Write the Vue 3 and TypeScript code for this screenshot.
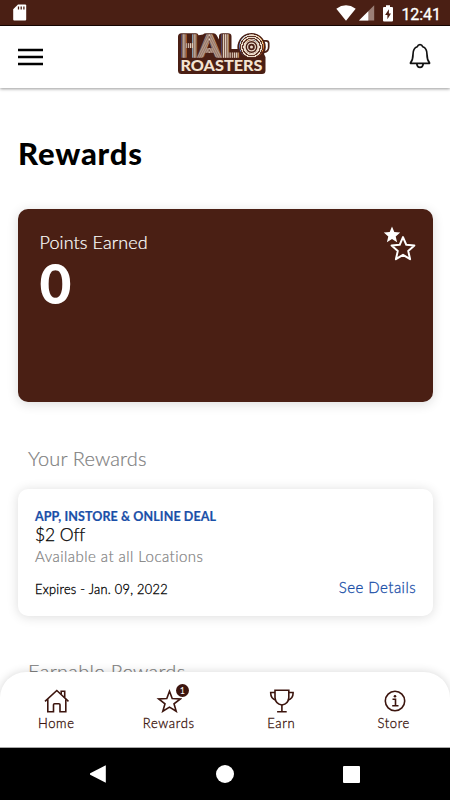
<script setup lang="ts">
interface Tab {
  id: string
  label: string
  badge?: number
}

interface Offer {
  channel: string
  title: string
  place: string
  expires: string
}

const points = 0

const offers: Offer[] = [
  {
    channel: 'APP, INSTORE & ONLINE DEAL',
    title: '$2 Off',
    place: 'Available at all Locations',
    expires: 'Expires - Jan. 09, 2022',
  },
]

const tabs: Tab[] = [
  { id: 'home', label: 'Home' },
  { id: 'rewards', label: 'Rewards', badge: 1 },
  { id: 'earn', label: 'Earn' },
  { id: 'store', label: 'Store' },
]

const logoLetters = [
  { char: 'H', x: 4.7, width: 17.2, paint: 'url(#bars)' },
  { char: 'A', x: 22.2, width: 22.4, paint: 'url(#chevrons)' },
  { char: 'L', x: 43.9, width: 18.5, paint: 'url(#bars)' },
  { char: 'O', x: 63.2, width: 24.6, paint: 'url(#rings)' },
]

// Start heights of the nested chevrons that stripe the letter A
const chevrons = Array.from({ length: 9 }, (_, i) => 2 - i * 4.4)
</script>

<template>
  <div class="phone">
    <div class="status">
      <svg class="sd" width="14" height="17" viewBox="0 0 14 17">
        <path d="M5 .5h7.2q1 0 1 1v14q0 1-1 1H1.200q-1 0-1-1V5.300z" fill="#fff" />
        <path d="M5.500 2.500v3M8.200 2.500v3M10.900 2.500v3" stroke="#4a1f14" stroke-width="1.300" />
      </svg>
      <div class="status-right">
        <svg class="wifi" width="20" height="16" viewBox="0 0 20 16">
          <path d="M.3 3.700Q10-3.200 19.700 3.700L10 15.700z" fill="#fff" />
        </svg>
        <svg class="signal" width="16" height="16" viewBox="0 0 16 16">
          <path d="M15.200.3v15.200H0z" fill="#9b7f77" />
          <path d="M9.300 6.200v9.300H0z" fill="#fff" />
        </svg>
        <svg class="battery" width="10" height="17" viewBox="0 0 10 17">
          <path d="M3 .3h4v1.700h2q1 0 1 1v12.500q0 1-1 1H1q-1 0-1-1V3q0-1 1-1h2z" fill="#fff" />
          <path d="M5.900 4.300 2.100 10h2.300v4.200L8 8.400H5.900z" fill="#4a1f14" />
        </svg>
        <span class="time">12:41</span>
      </div>
    </div>

    <header class="header">
      <svg class="menu" width="25" height="18" viewBox="0 0 25 18">
        <path d="M0 2h25M0 9h25M0 16h25" stroke="#000" stroke-width="2.600" />
      </svg>
      <svg class="logo" width="96" height="50" viewBox="0 -6 96 50">
        <defs>
          <pattern id="bars" patternUnits="userSpaceOnUse" x="5.200" y="0" width="2.200" height="40">
            <rect width="2.200" height="40" fill="#5e3325" />
            <rect width="1.100" height="40" fill="#ecdccb" />
          </pattern>
          <radialGradient id="rings" gradientUnits="userSpaceOnUse" cx="75.500" cy="15" r="2.300" spreadMethod="repeat">
            <stop offset="0" stop-color="#ecdccb" />
            <stop offset=".5" stop-color="#ecdccb" />
            <stop offset=".55" stop-color="#5e3325" />
            <stop offset="1" stop-color="#5e3325" />
          </radialGradient>
          <pattern id="chevrons" patternUnits="userSpaceOnUse" x="18.400" y="0" width="30" height="4.400">
            <rect width="30" height="4.400" fill="#5e3325" />
            <path
              v-for="y in chevrons"
              :key="y"
              :d="`M0 ${y + 30}L15 ${y}L30 ${y + 30}`"
              fill="none"
              stroke="#ecdccb"
              stroke-width="1"
            />
          </pattern>
        </defs>
        <path d="M86 8.800h4.200q2.500 0 2.500 2.500v3.500q0 5-4.700 5.600" fill="none" stroke="#4a1f14" stroke-width="1.700" />
        <path
          d="M5.500 1.300H20q2 0 2.500 2L27 2.500Q28 1.300 30 1.300H37.500Q39.500 1.300 40.500 3L43 7.500V4.500Q43 1.300 46.500 1.300H52Q55.500 1.300 55.500 4.500V17H61.500A14.200 14.200 0 1 1 88 22L89.500 25V38.500Q89.500 42 86 42H5.500Q2 42 2 38.500V4.800Q2 1.300 5.500 1.300z"
          fill="#4a1f14"
        />
        <g class="halo">
          <text
            v-for="l in logoLetters"
            :key="l.char"
            :x="l.x"
            y="25.300"
            :textLength="l.width"
            lengthAdjust="spacingAndGlyphs"
            :fill="l.paint"
            :stroke="l.paint"
          >{{ l.char }}</text>
        </g>
        <g fill="none" stroke="#ecdccb">
          <circle cx="75.500" cy="15" r="6.500" fill="#4a1f14" stroke-width="1.200" />
          <circle cx="75.500" cy="15" r="3.900" stroke-width="1.200" />
          <circle cx="75.500" cy="15" r="1.500" fill="#ecdccb" stroke="none" />
        </g>
        <text class="roasters" x="4.500" y="39" textLength="82" lengthAdjust="spacingAndGlyphs">ROASTERS</text>
      </svg>
      <svg class="bell" width="22" height="26" viewBox="0 0 22 26">
        <g fill="none" stroke="#111" stroke-width="1.700" stroke-linejoin="round">
          <path d="M1.500 19.800Q4 16.800 4 11.500Q4 5 8.300 3.700Q9 1.700 11 1.700T13.700 3.700Q18 5 18 11.500Q18 16.800 20.500 19.800V20.300H1.500z" />
          <path d="M7.800 20.800Q8.200 24.300 11 24.300T14.200 20.800" />
        </g>
      </svg>
    </header>

    <main class="content">
      <h1>Rewards</h1>

      <section class="points">
        <div>
          <div class="points-label">Points Earned</div>
          <div class="points-value">{{ points }}</div>
        </div>
        <svg width="33" height="37" viewBox="0 0 33 37">
          <path d="M9 .6 11.300 6l5.900.5-4.500 3.900L14.100 16.200 9 13.100 3.900 16.200 5.300 10.400.8 6.500 6.700 6z" fill="#fff" />
          <path d="M20 11.100 23.300 18.800 31.400 19.500 25.200 24.900 27.100 33.200 20 28.800 12.900 33.200 14.800 24.900 8.600 19.500 16.700 18.800z" fill="#4a1f14" stroke="#fff" stroke-width="2" stroke-linejoin="round" />
        </svg>
      </section>

      <h2>Your Rewards</h2>

      <article v-for="offer in offers" :key="offer.title" class="offer">
        <div class="channel">{{ offer.channel }}</div>
        <div class="title">{{ offer.title }}</div>
        <div class="place">{{ offer.place }}</div>
        <div class="offer-foot">
          <span class="expires">{{ offer.expires }}</span>
          <a class="details">See Details</a>
        </div>
      </article>

      <h2>Earnable Rewards</h2>
    </main>

    <nav class="tabs">
      <a v-for="tab in tabs" :key="tab.id" class="tab">
        <span class="tab-icon">
          <svg width="26" height="24" viewBox="0 0 26 24" fill="none" stroke="#3c150e" stroke-width="1.600">
            <g v-if="tab.id === 'home'">
              <path d="M2 12.300 13.800 1.500 25.500 12.300" />
              <path d="M4.800 10.300V22.700H10.500V15.800Q10.500 14.700 11.600 14.700H15.900Q17 14.700 17 15.800V22.700H22.800V10.300" />
              <path d="M18.200 5V2.300H21.700V8.500" />
            </g>
            <path
              v-else-if="tab.id === 'rewards'"
              d="M13.500 2.300 16.200 9.600 24.300 10 18 14.800 20.200 22.300 13.500 18.100 6.800 22.300 9 14.800 2.700 10 10.800 9.600z"
            />
            <g v-else-if="tab.id === 'earn'">
              <path d="M7 1.300H20.800V8.500Q20.500 15 13.900 16Q7.300 15 7 8.500z" />
              <path d="M7 3.500H2.700Q2.500 9.500 8 11.200M20.800 3.500H25.100Q25.300 9.500 19.800 11.200M13.900 16V22.500M9.100 22.700H18.700" />
            </g>
            <g v-else>
              <circle cx="14" cy="12" r="9.700" />
              <path d="M11.500 10.200H14.500V16.500M11.200 16.800H17.500" />
              <circle cx="14" cy="7.300" r="1.300" fill="#3c150e" stroke="none" />
            </g>
          </svg>
          <span v-if="tab.badge" class="badge">{{ tab.badge }}</span>
        </span>
        <span class="tab-label">{{ tab.label }}</span>
      </a>
    </nav>

    <div class="system">
      <svg width="16" height="18" viewBox="0 0 16 18"><path d="M15.800.3v17.400L.2 9.800q-.8-.8 0-1.500z" fill="#fff" /></svg>
      <svg width="18" height="18" viewBox="0 0 18 18"><circle cx="9" cy="9" r="9" fill="#fff" /></svg>
      <svg width="17" height="17" viewBox="0 0 17 17"><rect width="17" height="17" rx="1" fill="#fff" /></svg>
    </div>
  </div>
</template>

<style>
body {
  background: #fff;
}
</style>

<style scoped>
* {
  box-sizing: border-box;
}
.phone {
  display: flex;
  flex-direction: column;
  width: 450px;
  height: 800px;
  overflow: hidden;
  background: #fff;
  color: #000;
  font-family: Lato, 'Open Sans', sans-serif;
  font-variant-ligatures: none;
}
.status {
  flex: none;
  display: flex;
  justify-content: space-between;
  height: 26px;
  padding: 4px 9px 0 13px;
  background: #4a1f14;
  border-bottom: 1px solid #160502;
}
.status svg {
  display: block;
}
.status-right {
  display: flex;
  height: 18px;
  padding-top: 1px;
}
.wifi {
  margin-right: 1px;
}
.signal {
  margin-left: 2px;
}
.battery {
  margin-left: 8px;
}
.time {
  margin-left: 8px;
  color: #fff;
  font: 400 16px/19px Roboto, sans-serif;
  letter-spacing: -0.05px;
  -webkit-text-stroke: 0.3px #fff;
}
.header {
  position: relative;
  z-index: 1;
  flex: none;
  display: flex;
  align-items: center;
  justify-content: space-between;
  height: 61.500px;
  padding: 0 19.500px 0 18px;
  background: #fff;
  box-shadow: 0 1px 3px rgba(0, 0, 0, 0.4);
}
.logo {
  margin: -12px 0 0 -4px;
}
.halo {
  font: 900 29.500px Lato, sans-serif;
  stroke-width: 1.400px;
}
.roasters {
  font: 900 15.500px Lato, sans-serif;
  fill: #f3e3d1;
}
.bell {
  margin-top: -1px;
}
.content {
  flex: 1;
  min-height: 0;
  padding: 46.500px 17px 0 18px;
  overflow: hidden;
}
h1 {
  margin: 0;
  font-size: 31px;
  line-height: 38px;
  font-weight: 900;
  letter-spacing: 0.85px;
}
.points {
  display: flex;
  justify-content: space-between;
  height: 193px;
  margin-top: 37px;
  padding: 22px 17px 0 21.500px;
  border-radius: 10px;
  background: #4a1f14;
  color: #fff;
  box-shadow: 0 2px 12px rgba(0, 0, 0, 0.14);
}
.points svg {
  margin-top: -5px;
}
.points-label {
  font-size: 18px;
  line-height: 22px;
  font-weight: 300;
  letter-spacing: 0.1px;
  -webkit-text-stroke: 0.2px #fff;
}
.points-value {
  font-size: 55px;
  line-height: 60px;
  font-weight: 900;
}
h2 {
  margin: 44px 0 0 10px;
  color: #808080;
  font-size: 20px;
  line-height: 24px;
  font-weight: 300;
  letter-spacing: 0.15px;
  -webkit-text-stroke: 0.2px #808080;
}
.offer {
  height: 127px;
  margin-top: 18.500px;
  margin-bottom: 43px;
  padding: 20.500px 17px 0 17px;
  border-radius: 10px;
  background: #fff;
  box-shadow: 0 1px 12px rgba(0, 0, 0, 0.14);
}
.offer + h2 {
  margin-top: 0;
  letter-spacing: 0.28px;
}
.channel {
  color: #1a4fa8;
  font-size: 12.500px;
  line-height: 16px;
  font-weight: 700;
  letter-spacing: 0.1px;
  -webkit-text-stroke: 0.2px #1a4fa8;
}
.title {
  font-size: 17.500px;
  line-height: 20px;
  font-weight: 300;
  letter-spacing: -0.1px;
  -webkit-text-stroke: 0.25px #000;
}
.place {
  color: #808080;
  font-size: 15px;
  line-height: 23px;
  font-weight: 300;
  letter-spacing: 0.45px;
  -webkit-text-stroke: 0.2px #808080;
}
.offer-foot {
  display: flex;
  justify-content: space-between;
  align-items: flex-end;
  margin-top: 8.500px;
  height: 20px;
}
.expires {
  font-size: 12.800px;
  line-height: 16px;
  font-weight: 300;
  letter-spacing: 0.28px;
  -webkit-text-stroke: 0.3px #000;
}
.details {
  color: #1a4fa8;
  font-size: 15px;
  line-height: 20px;
  font-weight: 300;
  letter-spacing: 0.45px;
  -webkit-text-stroke: 0.3px #1a4fa8;
}
.tabs {
  position: relative;
  z-index: 1;
  flex: none;
  display: grid;
  grid-template-columns: repeat(4, 1fr);
  height: 76.500px;
  margin-top: -76.500px;
  padding-top: 17.500px;
  border-bottom: 1px solid #a8a8a8;
  border-radius: 26px 26px 0 0;
  background: #fff;
  box-shadow: 0 0 10px rgba(0, 0, 0, 0.16);
}
.tab {
  display: flex;
  flex-direction: column;
  align-items: center;
  gap: 2px;
  color: #3c150e;
}
.tab-icon {
  position: relative;
  height: 24px;
}
.tab-icon svg {
  display: block;
}
.badge {
  position: absolute;
  top: -5px;
  right: -7px;
  width: 13px;
  height: 13px;
  border-radius: 50%;
  background: #3c150e;
  color: #fff;
  font-size: 9px;
  line-height: 13px;
  text-align: center;
}
.tab-label {
  font-size: 13px;
  line-height: 17px;
  font-weight: 300;
  letter-spacing: 0.65px;
  -webkit-text-stroke: 0.3px #3c150e;
}
.system {
  position: relative;
  z-index: 2;
  flex: none;
  display: flex;
  align-items: center;
  justify-content: space-between;
  height: 52px;
  padding: 0 90px;
  background: #000;
}
</style>
